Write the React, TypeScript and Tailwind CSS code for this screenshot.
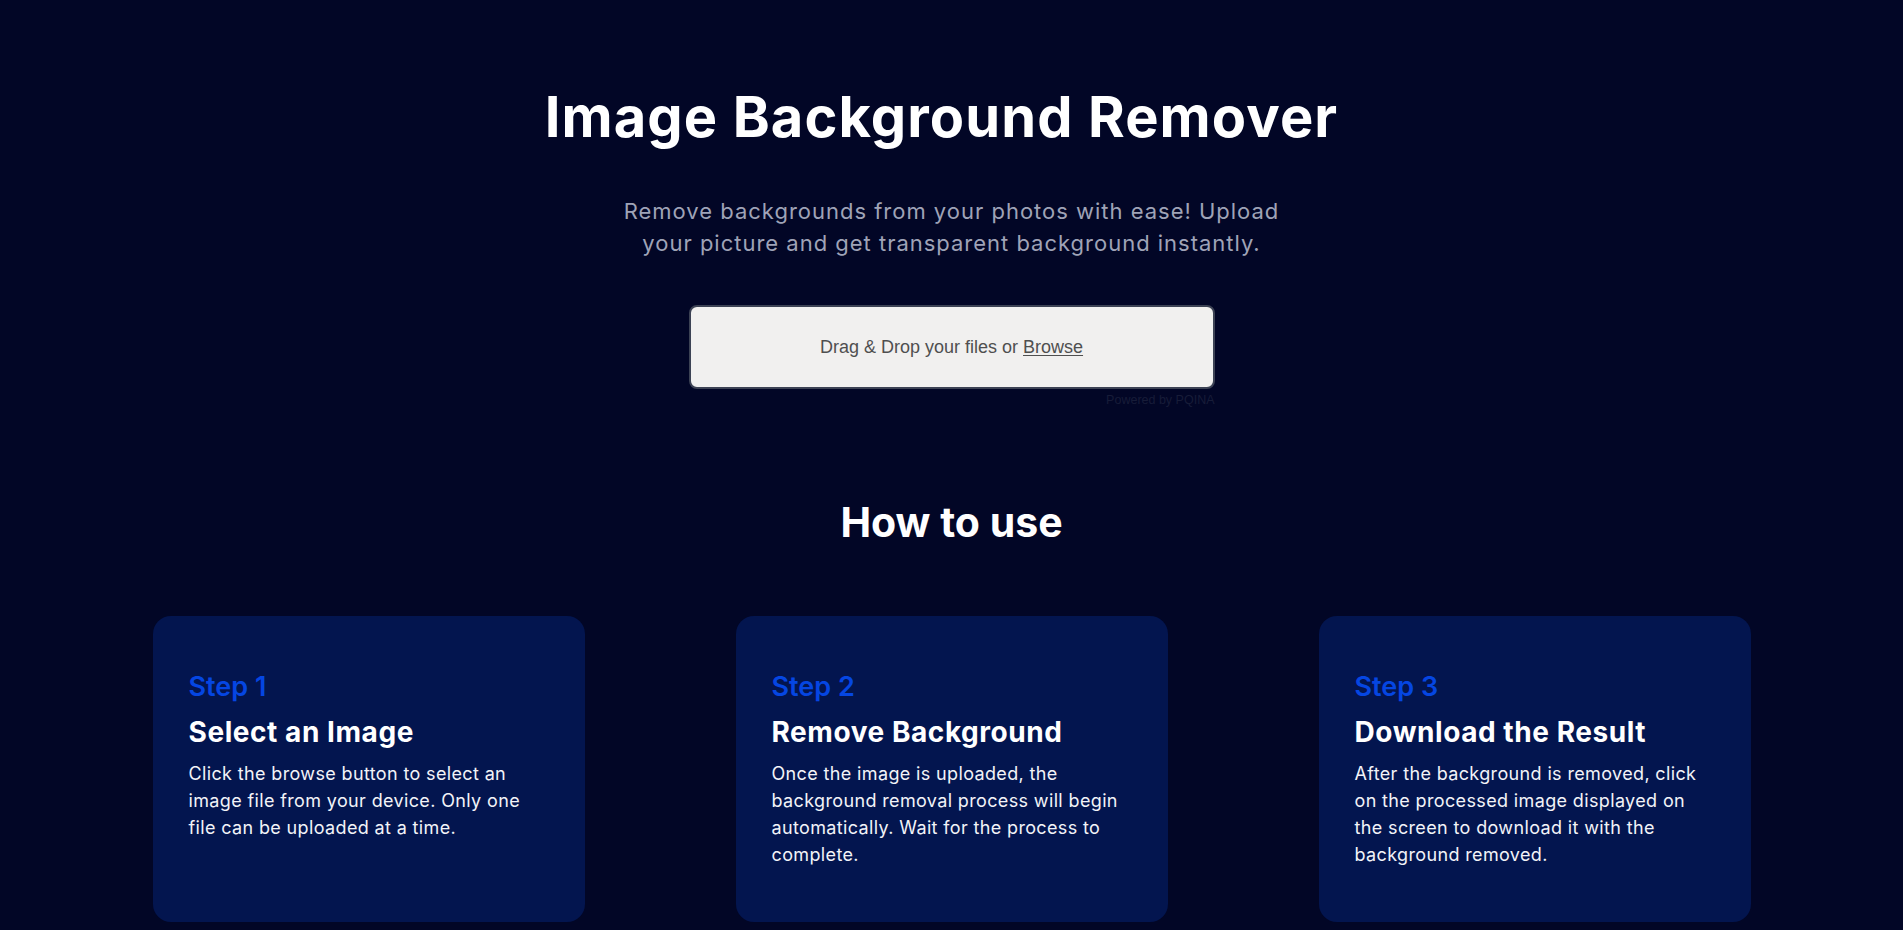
import React from "react";

const steps = [
  {
    step: "Step 1",
    title: "Select an Image",
    body: "Click the browse button to select an image file from your device. Only one file can be uploaded at a time.",
  },
  {
    step: "Step 2",
    title: "Remove Background",
    body: "Once the image is uploaded, the background removal process will begin automatically. Wait for the process to complete.",
  },
  {
    step: "Step 3",
    title: "Download the Result",
    body: "After the background is removed, click on the processed image displayed on the screen to download it with the background removed.",
  },
];

export default function App() {
  return (
    <div className="min-h-screen w-full bg-[#020626] font-['Inter',sans-serif] text-white overflow-hidden">
      <div className="flex flex-col items-center pt-[89px]">
        <h1 className="mr-[20px] text-[56px] leading-[56px] font-bold tracking-[1.1px] text-white text-center">
          Image Background Remover
        </h1>
        <p className="mt-[50px] w-[760px] text-center text-[22px] leading-[32px] tracking-[0.045em] text-[#9fa3b7]">
          Remove backgrounds from your photos with ease! Upload
          <br />
          your picture and get transparent background instantly.
        </p>
        <div className="mt-[46px] w-[526px] flex flex-col">
          <div className="h-[84px] w-full rounded-lg bg-[#f1f0ef] border-2 border-[#3c4254] flex items-center justify-center font-['Liberation_Sans',Arial,sans-serif] text-[18px] text-[#4f4f4f]">
            <span>
              Drag &amp; Drop your files or <span className="underline underline-offset-2 decoration-1">Browse</span>
            </span>
          </div>
          <div className="mt-[5px] text-right font-['Liberation_Sans',Arial,sans-serif] text-[12.5px] leading-[13px] text-[#171c38]">
            Powered by PQINA
          </div>
        </div>
        <h2 className="mt-[95px] text-[41px] leading-[40px] font-bold text-white text-center">
          How to use
        </h2>
        <div className="mt-[74px] w-[1598px] grid grid-cols-3 gap-x-[151px]">
          {steps.map((s) => (
            <div key={s.step} className="h-[306px] rounded-[18px] bg-[#03154f] pl-[36px] pr-[36px] pt-[53px]">
              <div className="text-[27px] leading-[36px] font-semibold text-[#0546e2]">{s.step}</div>
              <div className="mt-[9px] text-[28px] leading-[36px] font-bold tracking-[0.02em] text-white">{s.title}</div>
              <p className="mt-[10px] text-[18px] leading-[27px] tracking-[0.02em] text-[#f2f3f8]">{s.body}</p>
            </div>
          ))}
        </div>
      </div>
    </div>
  );
}
